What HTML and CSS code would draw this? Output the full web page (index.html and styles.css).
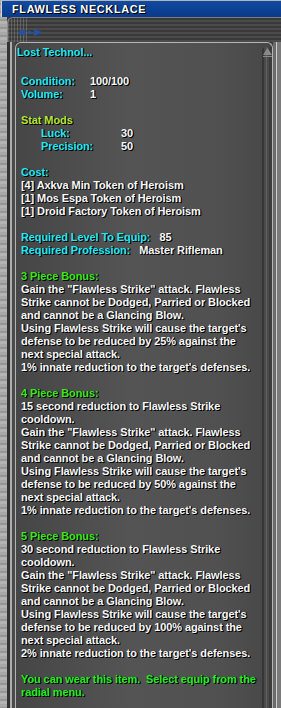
FILE: index.html
```html
<!DOCTYPE html>
<html lang="en">
<head>
    <meta charset="UTF-8">
    <title>Flawless Necklace</title>
    <link rel="stylesheet" href="styles.css">
</head>
<body>
    <div class="window">
        <div class="titlebar">FLAWLESS NECKLACE</div>
        <div class="frame">
            <div class="strip">
                <svg class="nav" width="26" height="7" viewBox="0 0 26 7">
                    <polygon points="0,3.5 8,0 8,7" fill="#2452a8"/>
                    <rect x="11" y="2" width="3" height="3" fill="#2452a8"/>
                    <polygon points="26,3.5 17,0 17,7" fill="#2452a8"/>
                </svg>
            </div>
            <div class="lower">
                <div class="lframe"></div>
                <div class="panel">
                    <div class="tip">
                        <div class="name">Lost Technol...</div>
                        <div class="body">
                            <div class="group attrs">
                                <span class="k">Condition:</span><span class="v">100/100</span>
                                <span class="k">Volume:</span><span class="v">1</span>
                            </div>

                            <div class="group">
                                <div class="mods">Stat Mods</div>
                                <div class="mod-list">
                                    <span class="k">Luck:</span><span class="v">30</span>
                                    <span class="k">Precision:</span><span class="v">50</span>
                                </div>
                            </div>

                            <div class="group">
                                <div class="k">Cost:</div>
                                <div class="v">[4] Axkva Min Token of Heroism</div>
                                <div class="v">[1] Mos Espa Token of Heroism</div>
                                <div class="v">[1] Droid Factory Token of Heroism</div>
                            </div>

                            <div class="group">
                                <div><span class="k">Required Level To Equip:</span><span class="v after">85</span></div>
                                <div><span class="k">Required Profession:</span><span class="v after">Master Rifleman</span></div>
                            </div>

                            <div class="group">
                                <div class="set">3 Piece Bonus:</div>
                                <div class="v">Gain the "Flawless Strike" attack. Flawless<br>
                                    Strike cannot be Dodged, Parried or Blocked<br>
                                    and cannot be a Glancing Blow.<br>
                                    Using Flawless Strike will cause the target's<br>
                                    defense to be reduced by 25% against the<br>
                                    next special attack.<br>
                                    1% innate reduction to the target's defenses.</div>
                            </div>

                            <div class="group">
                                <div class="set">4 Piece Bonus:</div>
                                <div class="v">15 second reduction to Flawless Strike<br>
                                    cooldown.<br>
                                    Gain the "Flawless Strike" attack. Flawless<br>
                                    Strike cannot be Dodged, Parried or Blocked<br>
                                    and cannot be a Glancing Blow.<br>
                                    Using Flawless Strike will cause the target's<br>
                                    defense to be reduced by 50% against the<br>
                                    next special attack.<br>
                                    1% innate reduction to the target's defenses.</div>
                            </div>

                            <div class="group">
                                <div class="set">5 Piece Bonus:</div>
                                <div class="v">30 second reduction to Flawless Strike<br>
                                    cooldown.<br>
                                    Gain the "Flawless Strike" attack. Flawless<br>
                                    Strike cannot be Dodged, Parried or Blocked<br>
                                    and cannot be a Glancing Blow.<br>
                                    Using Flawless Strike will cause the target's<br>
                                    defense to be reduced by 100% against the<br>
                                    next special attack.<br>
                                    2% innate reduction to the target's defenses.</div>
                            </div>

                            <div class="group ok">You can wear this item.&nbsp; Select equip from the<br>radial menu.</div>
                        </div>
                    </div>
                    <div class="scroll">
                        <svg width="9" height="10" viewBox="0 0 9 10">
                            <polygon points="4.5,0 9,7 0,7" fill="#8a8a8a"/>
                            <rect x="0" y="8" width="9" height="1" fill="#8a8a8a"/>
                        </svg>
                    </div>
                </div>
                <div class="rframe"></div>
            </div>
        </div>
    </div>
</body>
</html>
```

FILE: styles.css
```css
body {
    margin: 0;
    font-family: "Liberation Sans", Arial, sans-serif;
    background: repeating-linear-gradient(to bottom, #a9a9a9 0 3px, #969696 3px 5px, #b4b4b4 5px 8px);
}
.window {
    width: 281px;
    height: 708px;
    display: flex;
    flex-direction: column;
    overflow: hidden;
}
.titlebar {
    height: 16px;
    margin-left: 1px;
    padding-left: 10px;
    border-top: 1px solid #b4b4b4;
    border-left: 1px solid #d6d6d6;
    background: linear-gradient(#0f4aa2, #0a3a88);
    color: #fff;
    font-weight: bold;
    font-size: 11px;
    line-height: 16px;
    letter-spacing: 0.6px;
    text-shadow: 1px 1px 0 #000, 1px 0 0 #000;
}
.frame {
    flex: 1;
    margin-left: 7px;
    display: flex;
    flex-direction: column;
    background: #3b3b3b;
}
.strip {
    height: 24px;
    border-top: 1px solid #7c7c7c;
    border-left: 1px solid #8d8d8d;
    border-top-left-radius: 6px;
    background:
        repeating-linear-gradient(to right, rgba(160, 160, 160, 0.35) 0 1px, transparent 1px 3px) 0 0 / 21px 100% no-repeat,
        repeating-linear-gradient(to bottom, #393939 0 2px, #4b4b4b 2px 4px);
}
.nav {
    display: block;
    margin: 11px 0 0 9px;
}
.lower {
    flex: 1;
    display: flex;
}
.lframe {
    width: 8px;
    background: linear-gradient(to right, #333 0 3px, #adadad 3px 5px, #4a4a4a 5px);
}
.rframe {
    width: 8px;
    background: linear-gradient(to right, #6a6a6a 0 3px, #cfcfcf 3px 4px, #7a7a7a 4px);
}
.panel {
    flex: 1;
    display: flex;
    border: 1px solid #b5b5b5;
    border-bottom: none;
    border-radius: 6px 6px 0 0;
    background: linear-gradient(to right, #464646 0%, #545454 45%, #505050 80%, #474747 100%);
}
.tip {
    flex: 1;
    padding: 3px 0 0 1px;
    font-weight: bold;
    font-size: 11px;
    line-height: 13px;
    letter-spacing: -0.1px;
    color: #f8f8f8;
    text-shadow: 1px 1px 0 #000, 1px 0 0 #111;
    white-space: nowrap;
}
.name {
    color: #22e8f4;
}
.body {
    padding: 16px 0 0 4px;
}
.group + .group {
    margin-top: 13px;
}
.k {
    color: #22e8f4;
}
.v {
    color: #f8f8f8;
}
.after {
    margin-left: 9px;
}
.attrs {
    display: grid;
    grid-template-columns: 69px auto;
}
.mods {
    color: #b6e43a;
}
.mod-list {
    display: grid;
    grid-template-columns: 80px auto;
    padding-left: 20px;
}
.set {
    color: #3ce61e;
}
.ok {
    color: #22ee22;
}
.scroll {
    width: 10px;
    margin-top: 4px;
    border-top-left-radius: 4px;
    background: linear-gradient(to right, #363636 0 2px, #4a4a4a 2px 4px, #626262 4px 5px, #4a4a4a 5px 7px, #3c3c3c 7px);
}
.scroll svg {
    display: block;
    margin: 1px 0 0 1px;
}
```
